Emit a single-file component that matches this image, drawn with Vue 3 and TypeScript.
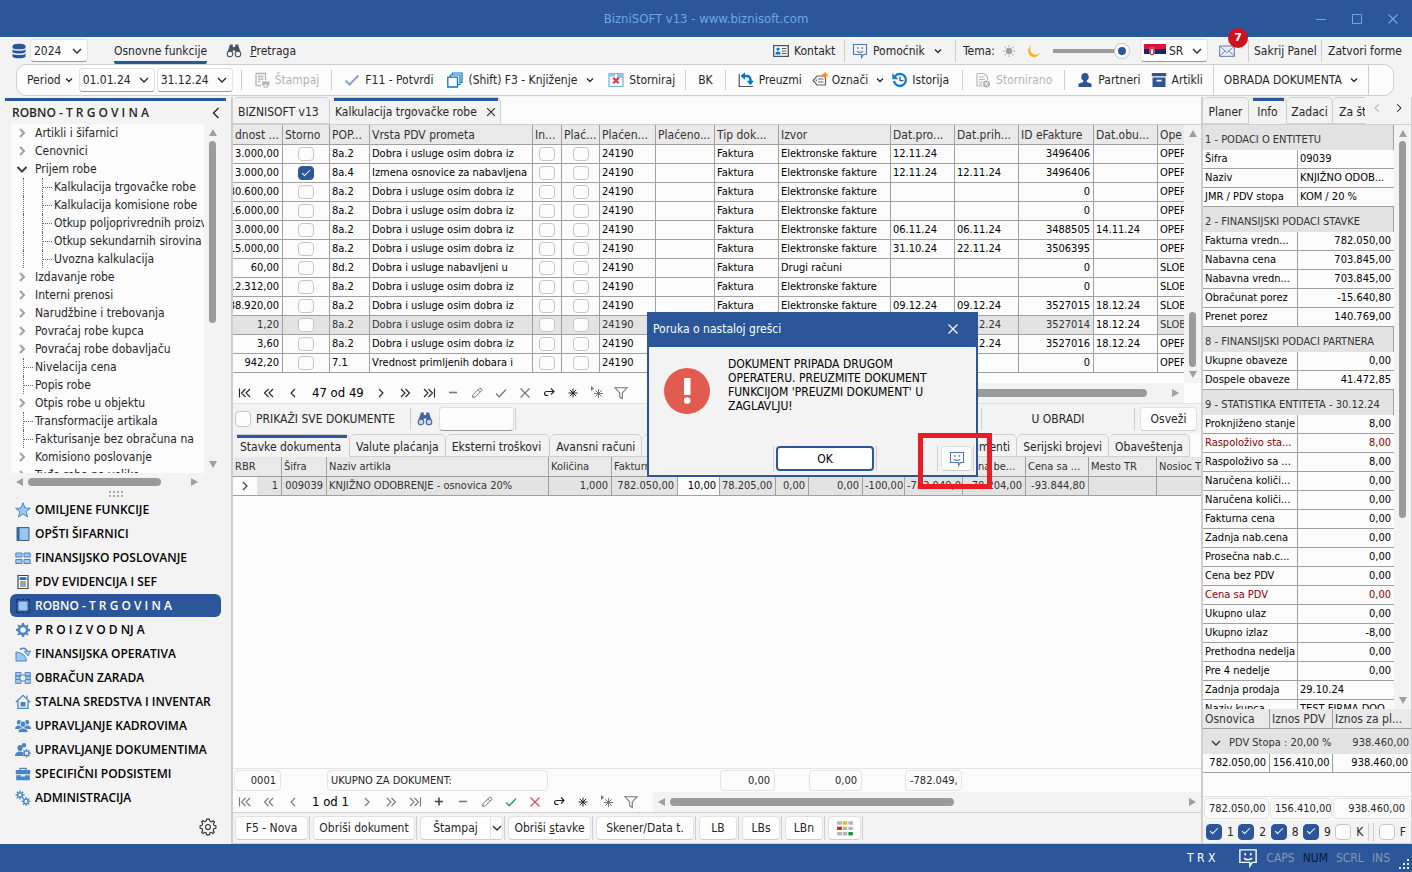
<script setup lang="ts">
import { h, ref } from 'vue'

type Shape = [d: string, fill?: string, stroke?: string, width?: number]

const blue = '#2b579a'
const sky = '#4a86c5'
const pale = '#9cc8f0'
const ink = '#333'

const gearPath =
  'M8 1 9 1 9.5 3 11 3.6 12.8 2.5 13.6 3.3 12.5 5 13.1 6.5 15 7 15 9 13.1 9.5 12.5 11 13.6 12.8 12.8 13.6 11 12.5 9.5 13.1 9 15 7 15 6.5 13.1 5 12.5 3.2 13.6 2.4 12.8 3.5 11 2.9 9.5 1 9 1 7 2.9 6.5 3.5 5 2.4 3.2 3.2 2.4 5 3.5 6.5 2.9 7 1ZM8 5.2A2.8 2.8 0 1 0 8 10.8 2.8 2.8 0 1 0 8 5.2Z'
const smile: Shape[] = [
  ['M1.5 1.5H14.5V11.5H11.5L9.5 14.5V11.5H1.5Z', 'none', 'currentColor', 1.1],
  ['M5 4.2H6.5V5.8H5ZM9.5 4.2H11V5.8H9.5Z', 'currentColor'],
  ['M4.8 8C6 9.8 10 9.8 11.2 8', 'none', 'currentColor', 1.2],
]
const binoculars = (body: string, lens: string): Shape[] => [
  ['M4 1.5H6.8V4H9.2V1.5H12L14.8 10H9.3V7.5H6.7V10H1.2Z', body],
  ['M4 8.2A2.8 2.8 0 1 0 4 13.8 2.8 2.8 0 1 0 4 8.2ZM12 8.2A2.8 2.8 0 1 0 12 13.8 2.8 2.8 0 1 0 12 8.2Z', lens, body, 1.1],
]

const icons: Record<string, Shape[]> = {
  down: [['M4 6 8 10 12 6', 'none', 'currentColor', 1.3]],
  smallDown: [['M5 6.5 8 9.5 11 6.5', 'none', 'currentColor', 1.3]],
  left: [['M10.5 3 5.5 8 10.5 13', 'none', 'currentColor', 1.4]],
  right: [['M5.5 3 10.5 8 5.5 13', 'none', 'currentColor', 1.4]],
  open: [['M3.5 6 8 10.5 12.5 6', 'none', '#404040', 2]],
  shut: [['M6 4 10 8 6 12', 'none', '#a0a0a0', 2]],
  close: [['M3.5 3.5 12.5 12.5M12.5 3.5 3.5 12.5', 'none', 'currentColor', 1.2]],
  min: [['M3 8.5H13', 'none', 'currentColor', 1]],
  max: [['M3.5 3.5H12.5V12.5H3.5Z', 'none', 'currentColor', 1]],
  db: [
    ['M1.5 3C1.5 0 14.5 0 14.5 3V4.4C14.5 7 1.5 7 1.5 4.4Z', blue],
    ['M1.5 6.2C3 8.3 13 8.3 14.5 6.2V8.8C14.5 11.2 1.5 11.2 1.5 8.8Z', blue],
    ['M1.5 10.6C3 12.6 13 12.6 14.5 10.6V13.2C14.5 16 1.5 16 1.5 13.2Z', blue],
  ],
  find: binoculars('#4a5560', '#f3f3f3'),
  findBlue: binoculars('#46649c', '#c3d8f2'),
  card: [
    ['M.7 2.7H15.3V13.3H.7Z', '#fff', '#4a5560', 1.3],
    ['M5 4.5A1.6 1.6 0 1 0 5 7.7 1.6 1.6 0 1 0 5 4.5ZM2.5 11.5V10Q2.5 8.5 5 8.5T7.5 10V11.5Z', '#0078d4'],
    ['M9 5.5H13.5M9 8H13.5M9 10.5H13.5', 'none', '#4a5560', 1],
  ],
  smile,
  sun: [
    ['M8 4.8A3.2 3.2 0 1 0 8 11.2 3.2 3.2 0 1 0 8 4.8Z', '#a0a0a0'],
    ['M8 2V3.7M8 12.3V14M2 8H3.7M12.3 8H14M3.7 3.7 4.8 4.8M11.2 11.2 12.3 12.3M12.3 3.7 11.2 4.8M4.8 11.2 3.7 12.3', 'none', '#b8b8b8', 1.4],
  ],
  moon: [['M5.5 2.5A6 6 0 1 0 13.8 9.8 5.3 5.3 0 0 1 5.5 2.5Z', '#ffb115']],
  mail: [
    ['M.6 3H15.4V13.4H.6Z', '#e4ecf8', '#6d7fa8', 1],
    ['M.8 3.2 8 9.6 15.2 3.2M.8 13 6 8M15.2 13 10 8', 'none', '#6d7fa8', 0.9],
  ],
  print: [
    ['M2 1.5H11.5V8M7 13.5H2V1.5M4 4.5H9.5M4 7H9.5M4 9.5H6.5', 'none', '#b5b5b5', 1.3],
    ['M8 9.5H15.5V13.5H14V15.5H9.5V13.5H8Z', '#b5b5b5'],
    ['M10.5 12.5H13V14.5H10.5Z', '#fff'],
  ],
  check: [['M1.5 8.5 5.5 12.5 14.5 3.5', 'none', '#8fa6cf', 2.2]],
  stack: [
    ['M5.5 3V1H15V10.5H13.5', 'none', '#0078d4', 1.2],
    ['M3.3 5V3H13V12.5H11', 'none', '#0078d4', 1.2],
    ['M.8 5.2H10.5V15H.8Z', 'none', '#0078d4', 1.3],
  ],
  cancel: [
    ['M1 1.5H15V14.5H1Z', '#fff', '#6bb0ea', 1.2],
    ['M1 1.5H7V4.5H1ZM9 1.5H15V6H9Z', '#8cc4f2'],
    ['M5.3 5.8 10.7 11.2M10.7 5.8 5.3 11.2', 'none', '#e03040', 2],
  ],
  fetch: [
    ['M1.2 2V14.5H15', 'none', '#4a5560', 1.2],
    ['M5.5 4H8.5Q12.5 4 12.5 8V9.5', 'none', '#0078d4', 2.4],
    ['M7 .3V7.7L2.5 4ZM8.8 8.7H16L12.4 13.2Z', '#0078d4'],
  ],
  tag: [
    ['M5 4H13.5V13H5L1 8.5Z', 'none', '#5a6670', 1.2],
    ['M6 7H11.5M6 10H11.5', 'none', '#5a6670', 1.2],
    ['M3.6 7.6H5V9.2H3.6Z', '#5a6670'],
    ['M13 .5 14 2 15.7 3 14 4.2 13 6 11.8 4.2 10 3 11.8 2Z', '#ff8c1a', '#ff8c1a', 1],
  ],
  history: [
    ['M3 4.5A6 6 0 1 1 2 9', 'none', '#0f7bd6', 2.3],
    ['M.3 1V7.3H6.3Z', '#0f7bd6'],
    ['M8 4.5V8.7H11.5', 'none', '#4a5560', 1.3],
  ],
  docOff: [
    ['M2 1.5H9L12.5 5V8M8 14H2V1.5M4 5H9.5M4 7.5H10M4 10H8M4 12H7', 'none', '#b8b8b8', 1.2],
    ['M11.5 8.5A3.5 3.5 0 1 0 11.5 15.5 3.5 3.5 0 1 0 11.5 8.5Z', '#b0b0b0'],
    ['M10 10.5 13 13.5M13 10.5 10 13.5', 'none', '#fff', 1.1],
  ],
  person: [['M8 1A3.6 4 0 0 0 6.3 8.6V10L1.5 11.8V15H14.5V11.8L9.7 10V8.6A3.6 4 0 0 0 8 1Z', blue]],
  box: [['M.8 1H15.2V4.2H.8ZM1.5 5.5H14.5V15H1.5ZM5.5 7.8V9.4H10.5V7.8Z', blue]],
  star: [['M8 .8 10 6 15.4 6.3 11.2 9.7 12.6 15 8 12 3.4 15 4.8 9.7 .6 6.3 6 6Z', pale, sky, 1]],
  book: [
    ['M2 1.5H14V14.5H2Z', '#7fb6e8', '#3c6697', 1],
    ['M2 1.5H4.5V14.5H2Z', '#3c6697'],
    ['M5 3H13V13.5H5Z', pale],
  ],
  tiles: [['M.8 3H7V7H.8ZM9 3H15.2V7H9ZM.8 9.5H7V13.5H.8ZM9 9.5H15.2V13.5H9Z', pale, sky, 1]],
  report: [
    ['M3 1.5H13V14.5H3Z', '#fff', '#3f4850', 1.2],
    ['M4.5 3.2H11.5V6H4.5Z', '#0078d4'],
    ['M5 8H11M5 10H11M5 12H11', 'none', '#3f4850', 1],
  ],
  square: [
    ['M1.5 5V1.5H5M7 1.5H9M11 1.5H14.5V5M14.5 7V9M14.5 11V14.5H11M9 14.5H7M5 14.5H1.5V11M1.5 9V7', 'none', '#16355f', 1],
    ['M3.5 3.5H12.5V12.5H3.5Z', pale],
  ],
  gear: [[gearPath, sky]],
  pie: [
    ['M1 6V15H11.5Q11 7 1 6Z', pale, sky, 1],
    ['M5 3.5Q10 0 12.5 6', 'none', sky, 1.6],
    ['M9.3 5.6 15.6 5 13 10Z', pale, sky, 0.9],
  ],
  pay: [
    ['M.7 2.5H6V6H.7ZM.7 6H6V9.5H.7ZM.7 9.5H6V13.5H.7ZM10 2.5H15.3V6H10ZM10 6H15.3V9.5H10ZM10 9.5H15.3V13.5H10Z', pale, sky, 0.9],
    ['M8 4.8A3.2 3.2 0 1 0 8 11.2 3.2 3.2 0 1 0 8 4.8Z', '#e8f2fc', '#5b7fa5', 1],
  ],
  house: [
    ['M.8 8.2 8 1.3 15.2 8.2M3 7V14.3H13V7M12 4V1.5', 'none', sky, 1.3],
    ['M5.5 8H10.5V12.5H5.5Z', sky],
  ],
  people: [
    ['M4 2A2.2 2.2 0 1 0 4 6.5 2.2 2.2 0 1 0 4 2ZM12 2A2.2 2.2 0 1 0 12 6.5 2.2 2.2 0 1 0 12 2ZM0 11Q0 7.5 4 7.5T8 11ZM8 11Q8 7.5 12 7.5T16 11Z', sky],
    ['M8 3A2.8 3.2 0 1 0 8 9.4 2.8 3.2 0 1 0 8 3ZM3 14.6Q3 10 8 10T13 14.6Z', sky, '#f3f3f3', 0.8],
  ],
  peopleGear: [
    ['M9 1A2.3 2.3 0 1 0 9 5.6 2.3 2.3 0 1 0 9 1ZM5 3A2.6 3 0 1 0 5 9 2.6 3 0 1 0 5 3ZM0 14Q0 9.5 5 9.5T8 14Z', sky],
    ['M11.5 7V15.6M7.2 11.3H15.8M8.5 8.3 14.5 14.3M14.5 8.3 8.5 14.3', 'none', sky, 1.4],
    ['M11.5 9A2.3 2.3 0 1 0 11.5 13.6 2.3 2.3 0 1 0 11.5 9Z', '#f3f3f3', sky, 1.2],
  ],
  bag: [
    ['M5 4V2.3H11V4', 'none', sky, 1.3],
    ['M.8 4H15.2V8.2H.8ZM1.2 9.2H6V10.5H10V9.2H14.8V14.2H1.2Z', sky],
  ],
  gears: [
    ['M5 .5V9.5M.5 5H9.5M1.8 1.8 8.2 8.2M8.2 1.8 1.8 8.2M11 7V15.8M6.6 11.4H15.4M8 8.4 14 14.4M14 8.4 8 14.4', 'none', sky, 1.4],
    ['M5 2.8A2.2 2.2 0 1 0 5 7.2 2.2 2.2 0 1 0 5 2.8ZM11 9.2A2.2 2.2 0 1 0 11 13.6 2.2 2.2 0 1 0 11 9.2Z', '#f3f3f3', sky, 1.3],
  ],
  gearLine: [
    ['M6.8 1H9.2L9.7 2.8 11 3.4 12.7 2.4 13.8 3.6 12.7 5.2 13.3 6.5 15 6.9V9.2L13.2 9.6 12.6 11 13.6 12.6 12.5 13.7 11 12.7 9.6 13.3 9.2 15H6.8L6.4 13.3 5 12.7 3.4 13.7 2.3 12.6 3.3 11 2.8 9.6 1 9.2V6.8L2.8 6.4 3.3 5 2.3 3.4 3.4 2.3 5 3.3 6.3 2.8Z', 'none', ink, 1],
    ['M8 5.8A2.2 2.2 0 1 0 8 10.2 2.2 2.2 0 1 0 8 5.8Z', 'none', ink, 1],
  ],
  first: [['M2.5 3.5V12.5M8.5 4 4.5 8 8.5 12M13 4 9 8 13 12', 'none', 'currentColor', 1.1]],
  prevPage: [['M7.5 4 3.5 8 7.5 12M12 4 8 8 12 12', 'none', 'currentColor', 1.1]],
  prev: [['M10 4 6 8 10 12', 'none', 'currentColor', 1.1]],
  next: [['M6 4 10 8 6 12', 'none', 'currentColor', 1.1]],
  nextPage: [['M4 4 8 8 4 12M8.5 4 12.5 8 8.5 12', 'none', 'currentColor', 1.1]],
  last: [['M13.5 3.5V12.5M3 4 7 8 3 12M7.5 4 11.5 8 7.5 12', 'none', 'currentColor', 1.1]],
  plus: [['M4 7.5H12M8 3.5V11.5', 'none', 'currentColor', 1.6]],
  minus: [['M4 7.5H12', 'none', 'currentColor', 1.6]],
  edit: [['M3.5 12.5 4.2 9.5 10.5 3.2Q12.5 2.5 12.8 5.5L6.5 11.8ZM9 4.8 11.2 7', 'none', 'currentColor', 1]],
  tick: [['M3 8.5 6.3 11.8 13 4.5', 'none', 'currentColor', 1.3]],
  redo: [['M13 6.5H6Q3.5 6.5 3.5 8.5T6 10.5H7.5M10 3.5 13 6.5 10 9.5', 'none', 'currentColor', 1.1]],
  asterisk: [['M8 3.5V12.5M3.5 8H12.5M4.8 4.8 11.2 11.2M11.2 4.8 4.8 11.2', 'none', 'currentColor', 1]],
  asteriskGo: [
    ['M9.5 4V13M5 8.5H14M6.3 5.3 12.7 11.7M12.7 5.3 6.3 11.7', 'none', 'currentColor', 1],
    ['M2 1V6L5 3.5Z', 'currentColor'],
  ],
  funnel: [['M2 2.8H14L9.3 8V13.5L6.7 12V8Z', 'none', 'currentColor', 1.1]],
  palette: [
    ['M1 2H5.2V5H1ZM11 2H15V5H11ZM6 6.8H10V9.8H6ZM11 6.8H15V9.8H11ZM1 11.6H5.2V14.6H1ZM6 11.6H10V14.6H6Z', '#b5b5b5'],
    ['M6 2H10V5H6Z', '#fbb015'],
    ['M1 6.8H5.2V9.8H1Z', '#d41f1f'],
    ['M11 11.6H15V14.6H11Z', '#0d9c2e'],
  ],
}

const Ico = (props: { n: string }) =>
  h(
    'svg',
    { viewBox: '0 0 16 16', class: 'ico', 'aria-hidden': 'true' },
    icons[props.n].map(([d, fill = 'none', stroke = 'none', width = 1]) =>
      h('path', { d, fill, stroke, 'stroke-width': width, 'fill-rule': 'evenodd' }),
    ),
  )
Ico.props = ['n']

const tree = [
  { t: 'Artikli i šifarnici', k: 'shut' },
  { t: 'Cenovnici', k: 'shut' },
  { t: 'Prijem robe', k: 'open' },
  { t: 'Kalkulacija trgovačke robe', k: 'child' },
  { t: 'Kalkulacija komisione robe', k: 'child' },
  { t: 'Otkup poljoprivrednih proizvoda', k: 'child' },
  { t: 'Otkup sekundarnih sirovina', k: 'child' },
  { t: 'Uvozna kalkulacija', k: 'child' },
  { t: 'Izdavanje robe', k: 'shut' },
  { t: 'Interni prenosi', k: 'shut' },
  { t: 'Narudžbine i trebovanja', k: 'shut' },
  { t: 'Povraćaj robe kupca', k: 'shut' },
  { t: 'Povraćaj robe dobavljaču', k: 'shut' },
  { t: 'Nivelacija cena', k: 'leaf' },
  { t: 'Popis robe', k: 'leaf' },
  { t: 'Otpis robe u objektu', k: 'shut' },
  { t: 'Transformacije artikala', k: 'leaf' },
  { t: 'Fakturisanje bez obračuna na', k: 'leaf' },
  { t: 'Komisiono poslovanje', k: 'shut' },
  { t: 'Tuđa roba na veliko', k: 'shut' },
]

const sections = [
  { t: 'OMILJENE FUNKCIJE', i: 'star' },
  { t: 'OPŠTI ŠIFARNICI', i: 'book' },
  { t: 'FINANSIJSKO POSLOVANJE', i: 'tiles' },
  { t: 'PDV EVIDENCIJA I SEF', i: 'report' },
  { t: 'ROBNO - T R G O V I N A', i: 'square', on: true },
  { t: 'P R O I Z V O D NJ A', i: 'gear' },
  { t: 'FINANSIJSKA OPERATIVA', i: 'pie' },
  { t: 'OBRAČUN ZARADA', i: 'pay' },
  { t: 'STALNA SREDSTVA I INVENTAR', i: 'house' },
  { t: 'UPRAVLJANJE KADROVIMA', i: 'people' },
  { t: 'UPRAVLJANJE DOKUMENTIMA', i: 'peopleGear' },
  { t: 'SPECIFIČNI PODSISTEMI', i: 'bag' },
  { t: 'ADMINISTRACIJA', i: 'gears' },
]

const docCols = [50, 47, 40, 163, 29, 38, 56, 59, 64, 112, 64, 64, 75, 64, 0]
const docHeads = ['dnost ...', 'Storno', 'POP...', 'Vrsta PDV prometa', 'In...', 'Plać...', 'Plaćen...', 'Plaćeno...', 'Tip dok...', 'Izvor', 'Dat.pro...', 'Dat.prih...', 'ID eFakture', 'Dat.obu...', 'Ope']
const dobra = 'Dobra i usluge osim dobra iz'
const el = 'Elektronske fakture'
const docs = [
  ['3.000,00', '8a.2', dobra, el, '12.11.24', '', '3496406', '', 'OPER'],
  ['3.000,00', '8a.4', 'Izmena osnovice za nabavljena', el, '12.11.24', '12.11.24', '3496406', '', 'OPER'],
  ['30.600,00', '8a.2', dobra, el, '', '', '0', '', 'OPER'],
  ['16.000,00', '8a.2', dobra, el, '', '', '0', '', 'OPER'],
  ['3.000,00', '8a.2', dobra, el, '06.11.24', '06.11.24', '3488505', '14.11.24', 'OPER'],
  ['15.000,00', '8a.2', dobra, el, '31.10.24', '22.11.24', '3506395', '', 'OPER'],
  ['60,00', '8d.2', 'Dobra i usluge nabavljeni u', 'Drugi računi', '', '', '0', '', 'SLOB'],
  ['12.312,00', '8a.2', dobra, el, '', '', '0', '', 'SLOB'],
  ['38.920,00', '8a.2', dobra, el, '09.12.24', '09.12.24', '3527015', '18.12.24', 'SLOB'],
  ['1,20', '8a.2', dobra, el, '09.12.24', '09.12.24', '3527014', '18.12.24', 'SLOB'],
  ['3,60', '8a.2', dobra, el, '09.12.24', '09.12.24', '3527016', '18.12.24', 'OPER'],
  ['942,20', '7.1', 'Vrednost primljenih dobara i', el, '', '', '0', '', 'OPER'],
]

const itemCols = [24, 25, 45, 222, 63, 66, 42, 56, 33, 54, 42, 58, 63, 63, 68, 0]
const itemHeads = ['Šifra', 'Naziv artikla', 'Količina', 'Fakturna', 'Rabat', 'Iznos', 'PDV', 'Porez', 'Marža', 'Razlika', 'Cena be...', 'Cena sa ...', 'Mesto TR', 'Nosioc T']
const itemCells = ['1', '009039', 'KNJIŽNO ODOBRENJE - osnovica 20%', '1,000', '782.050,00', '10,00', '78.205,00', '0,00', '0,00', '-100,00', '-782.049,00', '-78.204,00', '-93.844,80', '', '']
const leftItem = [2, 9, 10]

const nav1 = [
  ['first', 'dark'], ['prevPage', 'dark'], ['prev', 'dark'], ['count', '47 od 49'], ['next', 'dark'], ['nextPage', 'dark'], ['last', 'dark'],
  ['minus', ''], ['edit', ''], ['tick', ''], ['close', ''], ['redo', 'dark'], ['asterisk', 'dark'], ['asteriskGo', ''], ['funnel', ''],
]
const nav2 = [
  ['first', ''], ['prevPage', ''], ['prev', ''], ['count', '1 od 1'], ['next', ''], ['nextPage', ''], ['last', ''],
  ['plus', 'mid'], ['minus', ''], ['edit', ''], ['tick', 'green'], ['close', 'red'], ['redo', 'dark'], ['asterisk', 'dark'], ['asteriskGo', ''], ['funnel', ''],
]

const info = [
  { h: '1 - PODACI O ENTITETU', rows: [['Šifra', '09039', 'l'], ['Naziv', 'KNJIŽNO ODOB...', 'l'], ['JMR / PDV stopa', 'KOM / 20 %', 'l']] },
  { h: '2 - FINANSIJSKI PODACI STAVKE', rows: [['Fakturna vredn...', '782.050,00'], ['Nabavna cena', '703.845,00'], ['Nabavna vredn...', '703.845,00'], ['Obračunat porez', '-15.640,80'], ['Prenet porez', '140.769,00']] },
  { h: '8 - FINANSIJSKI PODACI PARTNERA', rows: [['Ukupne obaveze', '0,00'], ['Dospele obaveze', '41.472,85']] },
  {
    h: '9 - STATISTIKA ENTITETA - 30.12.24',
    rows: [
      ['Proknjiženo stanje', '8,00'], ['Raspoloživo sta...', '8,00', 'red'], ['Raspoloživo sa ...', '8,00'], ['Naručena količi...', '0,00'], ['Naručena količi...', '0,00'],
      ['Fakturna cena', '0,00'], ['Zadnja nab.cena', '0,00'], ['Prosečna nab.c...', '0,00'], ['Cena bez PDV', '0,00'], ['Cena sa PDV', '0,00', 'red'],
      ['Ukupno ulaz', '0,00'], ['Ukupno izlaz', '-8,00'], ['Prethodna nedelja', '0,00'], ['Pre 4 nedelje', '0,00'], ['Zadnja prodaja', '29.10.24', 'l'], ['Naziv kupca', 'TEST FIRMA DOO', 'l'],
    ],
  },
]

const filters = ref([
  { t: '1', on: true }, { t: '2', on: true }, { t: '8', on: true }, { t: '9', on: true }, { t: 'K', on: false }, { t: 'F', on: false },
])
const zoom = ref(100)
</script>

<template>
  <div class="app">
    <header class="titlebar">
      <h1>BizniSOFT v13 - www.biznisoft.com</h1>
      <div class="winbtns">
        <button aria-label="Minimize"><Ico n="min" /></button>
        <button aria-label="Maximize"><Ico n="max" /></button>
        <button aria-label="Close"><Ico n="close" /></button>
      </div>
    </header>

    <div class="menu">
      <Ico n="db" />
      <span class="combo"><select aria-label="Godina"><option>2024</option></select><Ico n="down" /></span>
      <button class="menutab">Osnovne funkcije</button>
      <button class="search"><Ico n="find" /><span><u>P</u>retraga</span></button>
      <div class="menuright">
        <button><Ico n="card" />Kontakt</button>
        <i class="sep"></i>
        <button class="helper"><Ico n="smile" />Pomoćnik<Ico n="smallDown" class="dark" /></button>
        <i class="sep"></i>
        <label for="zoom">Tema:</label>
        <Ico n="sun" />
        <Ico n="moon" />
        <input id="zoom" v-model="zoom" type="range" min="0" max="100" />
        <span class="combo lang">
          <svg class="flag" viewBox="0 0 22 14" aria-hidden="true">
            <path d="M0 0H22V5H0Z" fill="#e0123c" /><path d="M0 5H22V10H0Z" fill="#0f2a6b" /><path d="M0 10H22V14H0Z" fill="#fff" />
            <path d="M5 3H11V9Q8 14 5 9Z" fill="#c8475a" /><path d="M7 5H9V10H7Z" fill="#eee" />
          </svg>
          <select aria-label="Jezik"><option>SR</option></select><Ico n="down" />
        </span>
        <button class="mail" aria-label="Poruke"><Ico n="mail" /><b>7</b></button>
        <i class="sep"></i>
        <button>Sakrij Panel</button>
        <i class="sep"></i>
        <button>Zatvori forme</button>
      </div>
    </div>

    <div class="ribbon">
      <button class="period">Period<Ico n="smallDown" /></button>
      <span class="combo"><select aria-label="Period od"><option>01.01.24</option></select><Ico n="down" /></span>
      <span class="combo"><select aria-label="Period do"><option>31.12.24</option></select><Ico n="down" /></span>
      <i class="sep"></i>
      <button class="off" disabled><Ico n="print" />Štampaj</button>
      <i class="sep"></i>
      <button class="confirm"><Ico n="check" />F11 - Potvrdi</button>
      <button class="post"><Ico n="stack" />(Shift) F3 - Knjiženje<Ico n="smallDown" /></button>
      <button><Ico n="cancel" />Storniraj</button>
      <i class="sep"></i>
      <button class="mid">BK</button>
      <i class="sep"></i>
      <button><Ico n="fetch" />Preuzmi</button>
      <button class="mark"><Ico n="tag" />Označi<Ico n="smallDown" /></button>
      <button class="past"><Ico n="history" />Istorija</button>
      <i class="sep"></i>
      <button class="off" disabled><Ico n="docOff" />Stornirano</button>
      <i class="sep"></i>
      <button><Ico n="person" />Partneri</button>
      <button><Ico n="box" />Artikli</button>
      <button class="mode">OBRADA DOKUMENTA<Ico n="smallDown" /></button>
    </div>

    <main class="body">
      <aside class="side">
        <div class="sidehead"><h2>ROBNO - T R G O V I N A</h2><button aria-label="Skupi"><Ico n="left" /></button></div>
        <div class="treewrap">
          <ul class="tree">
            <li v-for="n in tree" :key="n.t" :class="n.k">
              <Ico v-if="n.k === 'shut' || n.k === 'open'" :n="n.k" />
              <i v-if="n.k === 'child'" class="trunk"></i>
              <i v-if="n.k === 'child' || n.k === 'leaf'" class="branch"></i>
              <span>{{ n.t }}</span>
            </li>
          </ul>
          <div class="vbar"><i class="up"></i><b class="t1"></b><i class="dn"></i></div>
        </div>
        <div class="hbar sidebarh"><i class="lf"></i><b></b><i class="rt"></i></div>
        <div class="grip"></div>
        <nav>
          <a v-for="s in sections" :key="s.t" href="#" :class="{ on: s.on }"><Ico :n="s.i" />{{ s.t }}</a>
        </nav>
        <button class="settings" aria-label="Podešavanja"><Ico n="gearLine" /></button>
      </aside>

      <section class="centre">
        <div class="tabs top">
          <button class="t97">BIZNISOFT v13</button>
          <button class="on">Kalkulacija trgovačke robe<Ico n="close" /></button>
        </div>
        <div class="gridwrap docs">
          <div class="clip">
            <table>
              <colgroup><col v-for="(w, i) in docCols" :key="i" :style="{ width: w ? w + 'px' : 'auto' }" /></colgroup>
              <thead><tr><th v-for="t in docHeads" :key="t">{{ t }}</th></tr></thead>
              <tbody>
                <tr v-for="(r, i) in docs" :key="i" :class="{ sel: i === 9 }">
                  <td class="r"><span class="back">{{ r[0] }}</span></td>
                  <td class="c"><input type="checkbox" aria-label="Storno" :checked="i === 1" /></td>
                  <td>{{ r[1] }}</td>
                  <td>{{ r[2] }}</td>
                  <td class="c"><input type="checkbox" aria-label="Interni" /></td>
                  <td class="c"><input type="checkbox" aria-label="Plaćeno" /></td>
                  <td>24190</td>
                  <td></td>
                  <td>Faktura</td>
                  <td>{{ r[3] }}</td>
                  <td>{{ r[4] }}</td>
                  <td>{{ r[5] }}</td>
                  <td class="r">{{ r[6] }}</td>
                  <td class="plain">{{ r[7] }}</td>
                  <td>{{ r[8] }}</td>
                </tr>
              </tbody>
            </table>
          </div>
          <div class="vbar"><i class="up"></i><b class="t2"></b><i class="dn"></i></div>
        </div>
        <div class="navrow">
          <template v-for="[n, c] in nav1" :key="n">
            <span v-if="n === 'count'" class="count">{{ c }}</span>
            <button v-else :class="c" :aria-label="n"><Ico :n="n" /></button>
          </template>
          <div class="hbar hdoc"><b></b><i class="rt"></i></div>
        </div>
        <div class="tools">
          <label class="all"><input type="checkbox" />PRIKAŽI SVE DOKUMENTE</label>
          <i class="sep"></i>
          <Ico n="findBlue" />
          <input type="text" aria-label="Traži" />
          <i class="sep"></i>
          <i class="sep push"></i>
          <span class="state">U OBRADI</span>
          <i class="sep"></i>
          <button class="btn">Osveži</button>
        </div>
        <div class="tabs sub">
          <button class="on">Stavke dokumenta</button>
          <button>Valute plaćanja</button>
          <button>Eksterni troškovi</button>
          <button>Avansni računi</button>
          <button class="wide">Dokumenti</button>
          <button>Serijski brojevi</button>
          <button>Obaveštenja</button>
        </div>
        <div class="gridwrap items">
          <table>
            <colgroup><col v-for="(w, i) in itemCols" :key="i" :style="{ width: w ? w + 'px' : 'auto' }" /></colgroup>
            <thead><tr><th colspan="2">RBR</th><th v-for="t in itemHeads" :key="t">{{ t }}</th></tr></thead>
            <tbody>
              <tr class="sel">
                <td class="mark"><Ico n="next" /></td>
                <td v-for="(t, i) in itemCells" :key="i" :class="{ r: !leftItem.includes(i), plain: i === 5 }">{{ t }}</td>
              </tr>
            </tbody>
          </table>
        </div>
        <div class="totals">
          <output class="s1">0001</output>
          <output class="s2">UKUPNO ZA DOKUMENT:</output>
          <output class="s3">0,00</output>
          <output class="s4">0,00</output>
          <output class="s5">-782.049,</output>
        </div>
        <div class="navrow second">
          <template v-for="[n, c] in nav2" :key="n">
            <span v-if="n === 'count'" class="count short">{{ c }}</span>
            <button v-else :class="c" :aria-label="n"><Ico :n="n" /></button>
          </template>
          <div class="hbar hitem"><i class="lf"></i><b></b><i class="rt"></i></div>
        </div>
        <div class="actions">
          <button class="btn b1">F5 - Nova</button><i class="sep"></i>
          <button class="btn b2">Obriši dokument</button><i class="sep"></i>
          <span class="split"><button class="btn">Štampaj</button><button class="btn" aria-label="Više"><Ico n="down" /></button></span><i class="sep"></i>
          <button class="btn b3"><span>Obriši <u>s</u>tavke</span></button><i class="sep"></i>
          <button class="btn b4">Skener/Data t.</button><i class="sep"></i>
          <button class="btn b5">LB</button><i class="sep"></i>
          <button class="btn b5">LBs</button><i class="sep"></i>
          <button class="btn b5">LBn</button><i class="sep"></i>
          <button class="btn b6" aria-label="Boje"><Ico n="palette" /></button><i class="sep"></i>
        </div>
      </section>

      <aside class="panel">
        <div class="tabs ptabs">
          <button>Planer</button>
          <button class="on">Info</button>
          <button>Zadaci</button>
          <button class="cut">Za štampu</button>
          <span class="arrows"><button aria-label="Levo" class="dim"><Ico n="left" /></button><button aria-label="Desno"><Ico n="right" /></button></span>
        </div>
        <div class="props">
          <div class="clip">
            <table>
              <colgroup><col class="half" /><col /></colgroup>
              <tbody v-for="g in info" :key="g.h">
                <tr class="group"><th colspan="2">{{ g.h }}</th></tr>
                <tr v-for="(r, i) in g.rows" :key="i" :class="r[2]"><td>{{ r[0] }}</td><td>{{ r[1] }}</td></tr>
              </tbody>
            </table>
          </div>
          <div class="vbar"><i class="up"></i><b class="t3"></b><i class="dn"></i></div>
        </div>
        <div class="vat">
          <table>
            <colgroup><col class="v1" /><col class="v2" /><col /></colgroup>
            <thead><tr><th>Osnovica</th><th>Iznos PDV</th><th>Iznos za pl...</th></tr></thead>
            <tbody>
              <tr class="group"><th colspan="3"><div><Ico n="down" /><span>PDV Stopa : 20,00 %</span><em>938.460,00</em></div></th></tr>
              <tr><td class="r">782.050,00</td><td class="r">156.410,00</td><td class="r">938.460,00</td></tr>
            </tbody>
          </table>
        </div>
        <div class="vsum"><output>782.050,00</output><output>156.410,00</output><output>938.460,00</output></div>
        <div class="filters">
          <template v-for="f in filters" :key="f.t">
            <i v-if="f.t === 'F'" class="sep"></i><i v-if="f.t === 'F'" class="sep"></i>
            <label><input v-model="f.on" type="checkbox" />{{ f.t }}</label>
          </template>
        </div>
      </aside>
    </main>

    <footer class="status">
      <span class="trx">T R X</span>
      <Ico n="smile" />
      <span>CAPS</span><span class="num">NUM</span><span>SCRL</span><span>INS</span>
      <svg class="corner" viewBox="0 0 12 12" aria-hidden="true"><path d="M9 1H11V3H9ZM9 5H11V7H9ZM5 5H7V7H5ZM9 9H11V11H9ZM5 9H7V11H5ZM1 9H3V11H1Z" fill="#e6ecf5" /></svg>
    </footer>

    <div class="dialog" role="dialog" aria-labelledby="dlg-title">
      <div class="dlghead"><h2 id="dlg-title">Poruka o nastaloj grešci</h2><button aria-label="Zatvori"><Ico n="close" /></button></div>
      <div class="dlgbody">
        <svg class="alert" viewBox="0 0 46 46" aria-hidden="true">
          <circle cx="23" cy="23" r="23" fill="#e15b4f" /><path d="M20 10H26.5V27H20Z" fill="#fff" /><circle cx="23.2" cy="32.5" r="3.3" fill="#fff" />
        </svg>
        <p>DOKUMENT PRIPADA DRUGOM<br />OPERATERU. PREUZMITE DOKUMENT<br />FUNKCIJOM 'PREUZMI DOKUMENT' U<br />ZAGLAVLJU!</p>
      </div>
      <div class="dlgfoot">
        <i class="sep"></i><button class="ok">OK</button><i class="sep"></i>
        <i class="sep push"></i><button class="btn chat" aria-label="Pomoćnik"><Ico n="smile" /></button><i class="sep"></i>
      </div>
    </div>
    <div class="marker"></div>
  </div>
</template>

<style>
html, body, #app { height: 100%; }
body { margin: 0; background: #f3f3f3; }
</style>

<style scoped>
.app {
  --blue: #2b579a;
  --line: #a0a0a0;
  --soft: #cfcfcf;
  --ink: #262626;
  position: relative;
  display: flex;
  flex-direction: column;
  height: 100%;
  overflow: hidden;
  background: #f3f3f3;
  color: var(--ink);
  font: 12px/16px "DejaVu Sans Condensed", "Open Sans", sans-serif;
}
.app *, .app *::before, .app *::after { box-sizing: border-box; }
button, select, input { font: inherit; color: inherit; margin: 0; }
button { display: flex; align-items: center; padding: 0; border: 0; background: none; white-space: nowrap; text-align: left; }
h1, h2, p, ul { margin: 0; padding: 0; font: inherit; }
.ico { width: 16px; height: 16px; flex: none; display: block; }
.sep { flex: none; width: 1px; height: 22px; background: var(--soft); }

.titlebar { flex: none; height: 37px; background: var(--blue); color: #6ea6e4; display: grid; grid-template-columns: 1fr auto 1fr; align-items: center; }
.titlebar h1 { grid-column: 2; font-size: 13px; }
.winbtns { display: flex; gap: 20px; justify-self: end; padding-right: 11px; }

.menu { flex: none; height: 27px; display: flex; align-items: center; padding-left: 11px; }
.combo { position: relative; display: flex; align-items: center; height: 23px; background: #fdfdfd; border: 1px solid #e3e3e3; border-bottom-color: #999; border-radius: 4px; }
.combo select { appearance: none; border: 0; background: none; width: 100%; height: 20px; padding: 0 0 0 3px; outline: 0; }
.combo .ico { position: absolute; right: 2px; pointer-events: none; }
.menu > .combo { width: 58px; margin-left: 3px; }
.menutab { height: 27px; padding-top: 3px; margin-left: 26px; border-bottom: 3px solid var(--blue); border-radius: 2px; }
.search { margin-left: 19px; gap: 8px; }
.menuright { margin-left: auto; display: grid; grid-template-columns: 71px 8px 103px 8px 38px 25px 27px 87px 79px 29px 6px 67px 7px 84px; align-items: center; }
.menuright > button { gap: 5px; }
.helper .ico:first-child { color: #4a7ab5; }
.menuright .lang { width: 68px; }
.flag { width: 22px; height: 14px; flex: none; margin-left: 3px; }
.mail { position: relative; }
.mail b { position: absolute; left: 9px; top: -15px; width: 20px; height: 20px; border-radius: 50%; background: #d1101d; color: #fff; font: bold 11px/20px "DejaVu Sans", sans-serif; text-align: center; z-index: 2; }
input[type="range"] { appearance: none; width: 76px; height: 14px; background: linear-gradient(#9b9b9b, #9b9b9b) center / 100% 4px no-repeat; }
input[type="range"]::-webkit-slider-thumb { appearance: none; width: 14px; height: 14px; border-radius: 50%; background: var(--blue); border: 3px solid #fff; box-shadow: 0 0 0 1px #ccc; }

.ribbon { flex: none; height: 32px; margin: 0 18px 1px 16px; display: flex; align-items: center; background: #fdfdfd; border: 1px solid var(--soft); border-radius: 10px; padding-left: 10px; }
.ribbon > button { gap: 5px; margin-right: 10px; }
.ribbon > .sep { margin-right: 12px; height: 20px; }
.ribbon .combo { width: 76px; height: 24px; margin-right: 2px; }
.ribbon .combo + .sep { margin-left: 6px; }
.ribbon > .period { gap: 0; margin-right: 2px; }
.ribbon .off { color: #b5b5b5; margin-right: 12px; }
.ribbon > .confirm { margin-right: 14px; }
.ribbon > .mid { margin-right: 12px; }
.ribbon > .mark { gap: 4px; margin-right: 4px; }
.ribbon > .past { gap: 4px; margin-right: 13px; }
.ribbon > .mode { gap: 4px; height: 30px; margin: 0 auto 0 0; padding: 0 6px 0 10px; border: solid var(--soft); border-width: 0 1px; }

.body { flex: 1; min-height: 0; display: grid; grid-template-columns: 231px minmax(0, 1fr) 211px; }

.side { display: flex; flex-direction: column; min-height: 0; padding: 1px 5px 0; }
.sidehead { flex: none; display: flex; align-items: center; justify-content: space-between; height: 26px; border-top: 3px solid var(--blue); padding: 0 2px 0 7px; }
.sidehead h2, nav a { font: 600 12px/16px "Open Sans", "Noto Sans", sans-serif; }
.treewrap { flex: 1 1 0; min-height: 0; display: flex; padding: 0 5px 0 6px; }
.tree { flex: 1; overflow: hidden; list-style: none; background: #fcfcfc; }
.tree li { display: flex; align-items: center; height: 18px; white-space: nowrap; }
.tree .ico { margin: 0 5px 0 3px; }
.tree li.leaf { padding-left: 12px; }
.tree li.child { padding-left: 12px; }
.trunk { flex: none; width: 19px; height: 18px; border-left: 1px dotted #666; }
.branch { flex: none; display: flex; align-items: center; width: 12px; height: 18px; border-left: 1px dotted #666; }
.branch::after { content: ""; width: 9px; border-top: 1px dotted #666; }
.vbar { flex: none; width: 17px; display: flex; flex-direction: column; align-items: center; padding: 5px 0; }
.vbar i, .hbar i { flex: none; width: 0; height: 0; border: 4px solid transparent; }
.vbar i.up { border-top: 0; border-bottom: 7px solid var(--line); }
.vbar i.dn { border-bottom: 0; border-top: 7px solid var(--line); margin-top: auto; }
.vbar b { width: 7px; border-radius: 4px; background: #9b9b9b; }
.vbar .t1 { margin-top: 5px; height: 182px; }
.vbar .t2 { margin-top: 175px; height: 55px; }
.vbar .t3 { margin-top: 4px; height: 377px; }
.docs .vbar, .props .vbar { background: #f3f3f3; }
.hbar { display: flex; align-items: center; height: 17px; background: #f3f3f3; }
.hbar b { height: 8px; border-radius: 4px; background: #9b9b9b; }
.hbar i.lf { border-left: 0; border-right: 7px solid var(--line); }
.hbar i.rt { border-right: 0; border-left: 7px solid var(--line); margin-left: auto; }
.sidebarh { flex: none; width: 192px; padding: 0 5px; margin-left: 6px; }
.sidebarh b { width: 133px; margin-left: 5px; }
.grip { flex: none; width: 16px; height: 8px; margin: 0 auto; background: radial-gradient(circle, #aaa 1px, transparent 1px) 0 0 / 4px 4px; }
nav { flex: none; }
nav a { display: flex; align-items: center; gap: 4px; height: 24px; padding-left: 5px; margin: 0 5px; color: #000; text-decoration: none; white-space: nowrap; }
nav a.on { height: 23px; margin-bottom: 1px; background: var(--blue); color: #fff; border-radius: 6px; }
.settings { flex: none; align-self: flex-end; margin: 8px 9px 8px 0; }
.settings .ico { width: 18px; height: 18px; }

.centre { display: flex; flex-direction: column; min-width: 0; min-height: 0; border-left: 2px solid var(--soft); }
.tabs { flex: none; display: flex; background: #fbfbfb; }
.tabs > button { height: 100%; border: 1px solid var(--soft); border-left-width: 0; border-radius: 5px 5px 0 0; background: #f3f3f3; padding: 3px 5px 0; position: relative; }
.tabs > button.on::before { content: ""; position: absolute; top: 0; left: 4px; right: 2px; height: 3px; background: var(--blue); }
.tabs > button.on { border-bottom-color: #f3f3f3; }
.top { height: 27px; }
.top .t97 { width: 97px; }
.top .on { width: 171px; gap: 7px; }
.top .on .ico { width: 14px; height: 14px; }
.gridwrap { display: flex; background: #fcfcfc; min-height: 0; overflow: hidden; }
.docs { flex: none; height: 259px; border-top: 1px solid var(--soft); }
.clip { flex: 1; min-width: 0; overflow: hidden; }
table { width: 100%; table-layout: fixed; border-collapse: separate; border-spacing: 0; font-size: 11px; line-height: 14px; color: #000; }
th, td { height: 19px; padding: 0 3px; border: solid var(--line); border-width: 0 1px 1px 0; overflow: hidden; white-space: nowrap; text-align: left; font-weight: normal; vertical-align: middle; }
td { padding-left: 2px; }
thead th { height: 20px; background: #e9e9e9; color: #333; font-size: 12px; padding: 0 2px; }
.r { text-align: right; }
.c { text-align: center; padding: 0; }
.back { display: flex; justify-content: flex-end; }
.sel td { background: #e3e3e3; color: #333; }
.sel td.plain { background: #fcfcfc; color: #000; }
.docs td:last-child, .docs th:last-child, .items td:last-child, .items th:last-child { border-right: 0; }
input[type="checkbox"] { appearance: none; flex: none; position: relative; display: block; width: 16px; height: 16px; border: 1px solid #c6c6c6; border-radius: 4px; background: #fdfdfd; }
td input[type="checkbox"] { height: 14px; margin: 0 auto; }
input[type="checkbox"]:checked { background: var(--blue); border-color: var(--blue); }
input[type="checkbox"]:checked::after { content: ""; position: absolute; left: 3px; top: 3px; width: 8px; height: 4px; border: solid #fff; border-width: 0 0 1px 1px; transform: rotate(-45deg); }
.navrow { flex: none; height: 20px; display: flex; align-items: center; background: #fcfcfc; padding-left: 4px; color: #777; }
.navrow > button { width: 24px; height: 20px; }
.navrow .dark { color: #222; }
.navrow .mid { color: #444; }
.navrow .green { color: #1f9a70; }
.navrow .red { color: #e04858; }
.count { width: 64px; padding-left: 3px; color: #000; font-size: 13px; }
.count.short { width: 50px; }
.navrow .hbar { height: 100%; }
.hdoc { flex: 1; margin-left: 14px; margin-right: 17px; padding-right: 5px; }
.hdoc b { flex: 1; margin: 0 25px 0 20px; }
.hitem { flex: 1; margin-left: 6px; padding: 0 5px; }
.hitem b { width: 284px; margin-left: 5px; }
.tools { flex: none; height: 31px; display: flex; align-items: center; gap: 5px; padding: 0 4px 0 2px; border-top: 1px solid #e0e0e0; }
.all { display: flex; align-items: center; gap: 5px; width: 170px; white-space: nowrap; }
.tools > .ico { margin: 0 1px; }
.tools input[type="text"] { width: 75px; height: 24px; background: #fdfdfd; border: 1px solid #e0e0e0; border-bottom-color: #999; border-radius: 4px; padding: 0 4px; margin-right: -4px; }
.push { margin-left: auto; }
.state { width: 142px; text-align: center; }
.btn { justify-content: center; height: 24px; padding: 0 4px; background: #fefefe; border: 1px solid #e2e2e2; border-bottom-color: #ccc; border-radius: 4px; }
.tools .btn { width: 57px; }
.sub { height: 23px; }
.sub > button { padding: 3px 6px 0; }
.sub > button.on { padding: 3px 8px 0 7px; }
.sub > button:nth-child(3) { padding-right: 8px; }
.sub .wide { flex: 1; justify-content: flex-end; }
.sub > button:last-child { margin-right: 11px; }
.items { flex: 1 1 0; }
.items table { align-self: flex-start; }
.items thead th { font-size: 11px; }
.items .mark { background: #fcfcfc; border-right: 0; }
.items .mark .ico { margin-left: 2px; }
.totals { flex: none; height: 24px; display: flex; align-items: center; background: #fbfbfb; border-top: 1px solid #e3e3e3; padding-left: 1px; font-size: 11px; }
output { flex: none; height: 21px; line-height: 19px; border: 1px solid #e3e3e3; border-radius: 4px; background: #fcfcfc; padding: 0 4px; text-align: right; overflow: hidden; white-space: nowrap; }
.s1 { width: 47px; margin-right: 46px; }
.totals .s2 { width: 221px; text-align: left; margin-right: 172px; padding-left: 3px; }
.s3 { width: 55px; margin-right: 34px; }
.s4 { width: 53px; margin-right: 43px; }
.s5 { width: 57px; }
.actions { flex: none; height: 32px; display: flex; align-items: center; gap: 3px; border: solid var(--soft); border-width: 1px 0; padding-left: 2px; }
.actions .sep { height: 24px; margin-left: -2px; }
.b1 { width: 73px; }
.b2 { width: 102px; }
.b3 { width: 83px; }
.b4 { width: 98px; }
.b5 { width: 38px; }
.b6 { width: 33px; }
.b6 .ico { width: 20px; height: 18px; }
.split { display: flex; }
.split .btn:first-child { width: 71px; border-radius: 4px 0 0 4px; }
.split .btn:last-child { width: 12px; padding: 0; border-left: 0; border-radius: 0 4px 4px 0; }

.panel { display: flex; flex-direction: column; min-height: 0; min-width: 0; border-left: 2px solid var(--soft); border-right: 1px solid var(--soft); }
.ptabs { height: 27px; background: #f3f3f3; }
.ptabs > button { justify-content: center; width: 46px; padding: 3px 0 0; flex: none; }
.ptabs > button.on { width: 38px; }
.ptabs > button.cut { width: 32px; padding-left: 6px; overflow: hidden; justify-content: flex-start; border-radius: 5px 0 0 0; border-right: 0; }
.arrows { display: flex; align-items: center; gap: 6px; height: 22px; padding-left: 2px; }
.arrows .ico { width: 12px; height: 12px; margin-left: 4px; }
.dim { color: #aaa; }
.props { flex: 1 1 0; min-height: 0; display: flex; border-top: 1px solid var(--soft); }
.half { width: 95px; }
.group th { height: 25px; background: #e3e3e3; color: #333; border-bottom: 0; vertical-align: bottom; padding: 0 2px 3px; }
.props td { color: #000; background: #fcfcfc; padding: 0 2px; }
.props td:last-child { text-align: right; border-right: 0; padding-right: 3px; }
.props .l td:last-child { text-align: left; }
.props .red td { color: #8b0000; }
.vat { flex: none; height: 87px; background: #fcfcfc; }
.v1 { width: 67px; }
.v2 { width: 63px; }
.vat td { background: #fcfcfc; padding: 0 3px; }
.vat th:last-child, .vat td:last-child { border-right: 0; }
.vat .group div { display: flex; align-items: center; }
.vat .group .ico { margin-left: 3px; }
.vat .group span { margin-left: 5px; }
.vat .group em { margin-left: auto; font-style: normal; }
.vsum { flex: none; height: 24px; border-top: 1px solid #e3e3e3; background: #fbfbfb; display: grid; grid-template-columns: 65px 62px 1fr; gap: 1px; align-items: center; padding: 0 1px; font-size: 11px; }
.vsum output { display: flex; }
.vsum output:last-child { justify-content: flex-end; }
.filters { flex: none; height: 24px; display: flex; align-items: center; justify-content: space-between; padding: 0 5px 0 3px; border-bottom: 1px solid var(--soft); }
.filters label { display: flex; align-items: center; gap: 5px; }
.filters .sep { height: 18px; }

.status { flex: none; height: 28px; background: var(--blue); color: #8496b3; display: flex; align-items: center; justify-content: flex-end; gap: 8px; }
.status .trx { color: #fff; margin-right: 15px; }
.status .ico { width: 20px; height: 20px; color: #fff; }
.status .num { color: #0a1a33; }
.corner { width: 12px; height: 12px; align-self: flex-end; margin: 0 2px 2px 0; }

.dialog { position: absolute; left: 647px; top: 312px; width: 331px; height: 165px; display: flex; flex-direction: column; background: #f3f3f3; border: 2px solid var(--blue); color: #000; z-index: 5; }
.dlghead { flex: none; height: 33px; display: flex; align-items: center; justify-content: space-between; background: var(--blue); color: #fff; padding: 0 15px 3px 4px; }
.dlgbody { flex: 1; display: flex; gap: 18px; padding: 10px 0 0 15px; line-height: 14px; white-space: nowrap; }
.alert { width: 46px; height: 46px; margin-top: 11px; }
.dlgfoot { flex: none; display: flex; align-items: center; padding: 0 2px 4px 124px; }
.dlgfoot .sep { height: 25px; }
.ok { justify-content: center; width: 98px; height: 25px; margin: 0 2px; border: 2px solid var(--blue); border-radius: 4px; background: #fff; }
.chat { width: 31px; height: 25px; margin: 0 1px 0 3px; color: #4a7ab5; }
.marker { position: absolute; left: 918px; top: 433px; width: 74px; height: 56px; border: 5px solid #ed1c24; z-index: 6; pointer-events: none; }
</style>
